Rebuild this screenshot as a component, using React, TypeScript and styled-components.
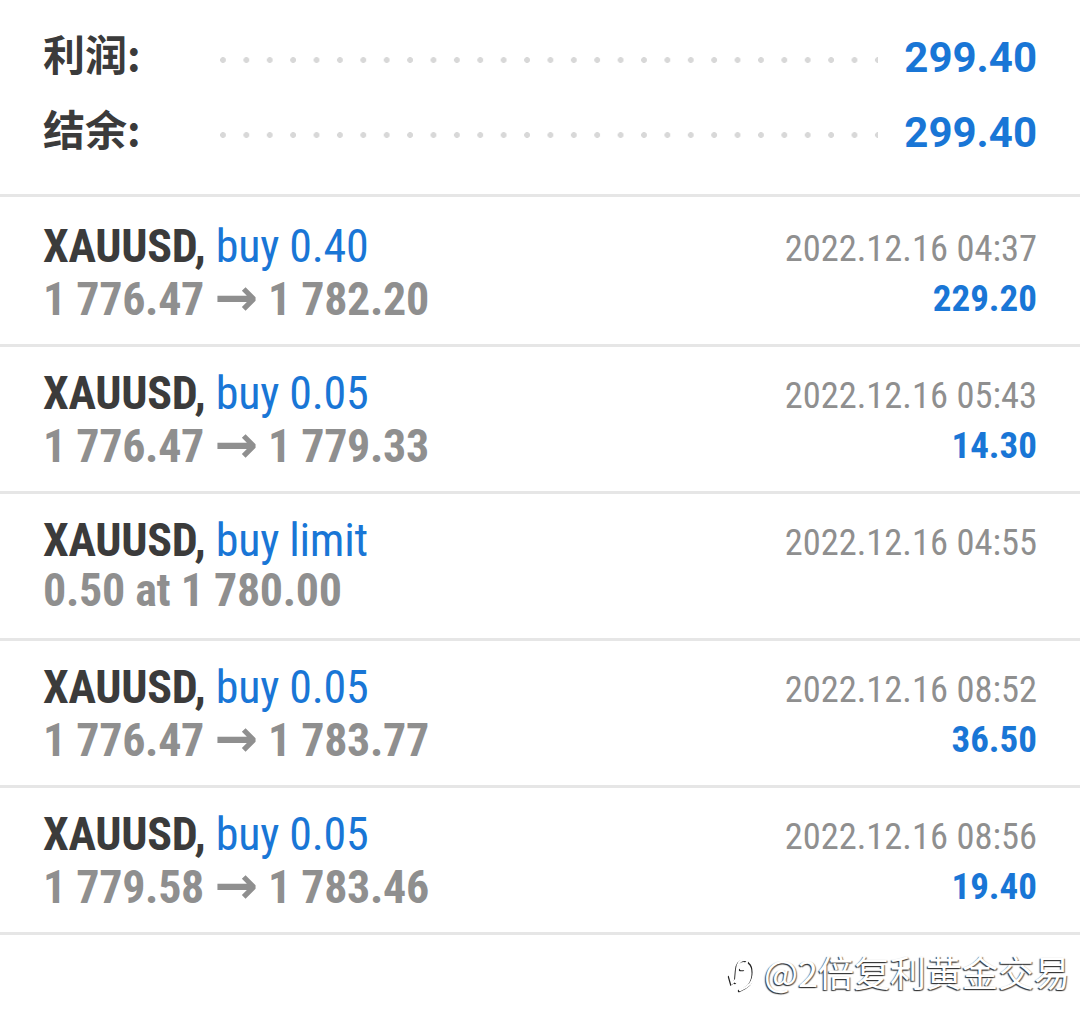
import styled, { createGlobalStyle } from 'styled-components'

const GlobalStyle = createGlobalStyle`
  html, body {
    margin: 0;
    padding: 0;
    background: #ffffff;
  }
  body {
    width: 1080px;
    height: 1030px;
    overflow: hidden;
    font-family: 'Roboto', 'Noto Sans CJK SC', sans-serif;
  }
`

const BLUE = '#1976d6'
const DARK = '#3b3b3b'
const GRAY = '#8f8f8f'

const Page = styled.div`
  width: 1080px;
  height: 1030px;
  background: #fff;
  position: relative;
`

// summary block at the top
const Summary = styled.div`
  padding: 15px 43px 29px 43px;
  border-bottom: 3px solid #e6e6e6;
`
const SummaryRow = styled.div`
  height: 75px;
  display: flex;
  align-items: center;
`
const Label = styled.div`
  font-family: 'Noto Sans CJK SC', 'Roboto', sans-serif;
  font-size: 42px;
  font-weight: bold;
  color: ${DARK};
  width: 177px;
`
const Dots = styled.div`
  flex: 1;
  height: 6px;
  margin: 14px 26px 0 0;
  background-image: radial-gradient(circle at 3px 3px, #d8d8d8 2.6px, transparent 3.2px);
  background-size: 23.4px 6px;
  background-repeat: repeat-x;
`
const SummaryValue = styled.div`
  font-family: 'Roboto', sans-serif;
  font-size: 42px;
  font-weight: bold;
  color: ${BLUE};
  padding-top: 9px;
`

// trade rows
const TradeList = styled.div`
  padding-top: 3px;
`
const TradeRow = styled.div`
  display: flex;
  justify-content: space-between;
  padding: 21px 43px 23px 43px;
  border-bottom: 3px solid #e6e6e6;
`
const Col = styled.div<{ $right?: boolean }>`
  display: flex;
  flex-direction: column;
  align-items: ${(p) => (p.$right ? 'flex-end' : 'flex-start')};
`
const Line = styled.div`
  height: 50px;
  line-height: 50px;
  white-space: nowrap;
  font-family: 'Roboto', sans-serif;
  font-stretch: 75%;
  font-size: 46px;
  letter-spacing: -0.3px;
`
const Symbol = styled.span`
  font-weight: bold;
  color: ${DARK};
`
const Side = styled.span`
  font-weight: normal;
  color: ${BLUE};
`
const Prices = styled(Line)`
  font-weight: bold;
  color: ${GRAY};
`
const Arrow = styled.span`
  font-family: 'DejaVu Sans', sans-serif;
  font-stretch: normal;
  font-weight: bold;
  font-size: 52px;
  line-height: 1;
`
const DateText = styled(Line)`
  font-size: 36.5px;
  line-height: 56px;
  letter-spacing: 0;
  color: ${GRAY};
`
const Profit = styled(Line)`
  font-size: 37px;
  line-height: 56px;
  letter-spacing: 0;
  font-weight: bold;
  color: ${BLUE};
`

const Watermark = styled.div`
  position: absolute;
  right: 10px;
  top: 945px;
  display: flex;
  align-items: center;
  gap: 2px;
  font-family: 'Noto Sans CJK SC', sans-serif;
  font-size: 36px;
  color: #fff;
  text-shadow: -1px 1px 1px #333, 1px 1px 1px #666;
`
const WatermarkIcon = styled.svg`
  width: 36px;
  height: 36px;
  margin-top: 6px;
  filter: drop-shadow(-1px 1px 0.5px #222);
`

const trades = [
  { side: 'buy 0.40', from: '1 776.47', to: '1 782.20', date: '2022.12.16 04:37', profit: '229.20' },
  { side: 'buy 0.05', from: '1 776.47', to: '1 779.33', date: '2022.12.16 05:43', profit: '14.30' },
  { side: 'buy limit', from: '0.50 at 1 780.00', to: '', date: '2022.12.16 04:55', profit: '' },
  { side: 'buy 0.05', from: '1 776.47', to: '1 783.77', date: '2022.12.16 08:52', profit: '36.50' },
  { side: 'buy 0.05', from: '1 779.58', to: '1 783.46', date: '2022.12.16 08:56', profit: '19.40' },
]

export default function App() {
  return (
    <Page>
      <GlobalStyle />
      <Summary>
        <SummaryRow>
          <Label>利润:</Label>
          <Dots />
          <SummaryValue>299.40</SummaryValue>
        </SummaryRow>
        <SummaryRow>
          <Label>结余:</Label>
          <Dots />
          <SummaryValue>299.40</SummaryValue>
        </SummaryRow>
      </Summary>
      <TradeList>
        {trades.map((t, i) => (
          <TradeRow key={i}>
            <Col>
              <Line>
                <Symbol>XAUUSD,</Symbol> <Side>{t.side}</Side>
              </Line>
              <Prices>
                {t.from}
                {t.to && (
                  <>
                    {' '}
                    <Arrow>{'\u2192'}</Arrow> {t.to}
                  </>
                )}
              </Prices>
            </Col>
            <Col $right>
              <DateText>{t.date}</DateText>
              {t.profit && <Profit>{t.profit}</Profit>}
            </Col>
          </TradeRow>
        ))}
      </TradeList>
      <Watermark>
        <WatermarkIcon viewBox="0 0 36 36" fill="none" stroke="#fff" strokeWidth="2.4" strokeLinecap="round">
          <path d="M20 4 C14 3 11 8 11 14 L10 26" />
          <path d="M4 20 L6 27 L10 24" />
          <path d="M15 13 L18 13" />
          <path d="M24 6 C29 10 29 22 24 28 C21 31 17 33 14 34" />
        </WatermarkIcon>
        <span>@2倍复利黄金交易</span>
      </Watermark>
    </Page>
  )
}
